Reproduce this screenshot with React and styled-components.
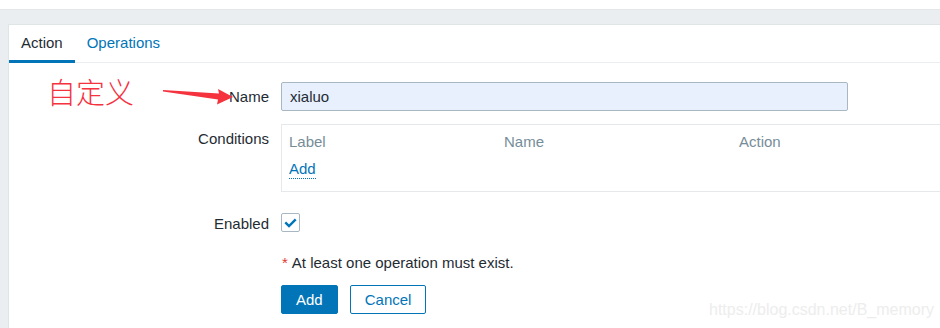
import { createGlobalStyle, styled } from "styled-components";

const GlobalStyle = createGlobalStyle`
  body {
    margin: 0;
    background: #ebeef0;
    font-family: "Liberation Sans", Arial, sans-serif;
    font-size: 15px;
    color: #1f2c33;
    overflow: hidden;
  }
`;

const Page = styled.div`
  position: relative;
  width: 940px;
  height: 328px;
  overflow: hidden;
`;

const TopStrip = styled.div`
  height: 9px;
  background: #fff;
  border-bottom: 1px solid #e3e7ea;
`;

const Main = styled.div`
  padding: 14px 0 0 8px;
`;

const Panel = styled.div`
  background: #fff;
  border: 1px solid #dfe4e7;
  border-right: none;
  height: 320px;
`;

const TabBar = styled.div`
  display: flex;
  height: 37px;
  border-bottom: 1px solid #ebeef0;
`;

const Tab = styled.div`
  height: 38px;
  box-sizing: border-box;
  padding: 8px 12px 0;
  line-height: 20px;
  margin-bottom: -1px;
  color: ${(p) => (p.$active ? "#1f2c33" : "#0275b8")};
  border-bottom: 3px solid ${(p) => (p.$active ? "#0275b8" : "transparent")};
`;

const Form = styled.div`
  padding-top: 19px;
`;

const Row = styled.div`
  display: grid;
  grid-template-columns: 260px 1fr;
  column-gap: 12px;
  align-items: start;
  margin-top: ${(p) => p.$mt || 0}px;
`;

const Label = styled.div`
  text-align: right;
  line-height: ${(p) => p.$lh || 29}px;
`;

const Input = styled.div`
  width: 567px;
  height: 29px;
  box-sizing: border-box;
  background: #e8f0fe;
  border: 1px solid #a9b7c2;
  border-radius: 2px;
  padding: 0 8px;
  line-height: 27px;
  color: #1f2c33;
`;

const CondBox = styled.div`
  height: 68px;
  box-sizing: border-box;
  border: 1px solid #e6e9eb;
  border-right: none;
  padding: 6px 0 0 7px;
`;

const CondHead = styled.div`
  display: grid;
  grid-template-columns: 215px 235px 1fr;
  line-height: 21px;
  color: #768d99;
`;

const LinkText = styled.span`
  display: inline-block;
  margin-top: 8px;
  line-height: 18px;
  color: #0275b8;
  border-bottom: 1px dotted #0275b8;
`;

const CheckBox = styled.div`
  width: 19px;
  height: 19px;
  box-sizing: border-box;
  border: 1px solid #a9b7c2;
  border-radius: 2px;
  display: flex;
  align-items: center;
  justify-content: center;
  svg {
    display: block;
  }
`;

const Message = styled.div`
  line-height: 18px;
  padding-left: 1px;
`;

const Asterisk = styled.span`
  color: #e33734;
  margin-right: 4px;
`;

const Buttons = styled.div`
  display: flex;
  gap: 12px;
`;

const Button = styled.div`
  height: 29px;
  box-sizing: border-box;
  padding: 0 14px;
  line-height: 27px;
  border-radius: 2px;
  border: 1px solid #0275b8;
  background: ${(p) => (p.$primary ? "#0275b8" : "#fff")};
  color: ${(p) => (p.$primary ? "#fff" : "#0275b8")};
`;

const Note = styled.div`
  position: absolute;
  left: 47px;
  top: 74px;
  font-family: "Noto Sans CJK SC", sans-serif;
  font-size: 29px;
  font-weight: 300;
  line-height: 34px;
  color: #f5333f;
`;

const Arrow = styled.svg`
  position: absolute;
  left: 0;
  top: 0;
  pointer-events: none;
`;

const Watermark = styled.div`
  position: absolute;
  left: 709px;
  top: 301px;
  font-size: 16px;
  line-height: 18px;
  color: #ededed;
`;

export default function App() {
  return (
    <Page>
      <GlobalStyle />
      <TopStrip />
      <Main>
        <Panel>
          <TabBar>
            <Tab $active>Action</Tab>
            <Tab>Operations</Tab>
          </TabBar>
          <Form>
            <Row>
              <Label>Name</Label>
              <Input>xialuo</Input>
            </Row>
            <Row $mt={13}>
              <Label>Conditions</Label>
              <CondBox>
                <CondHead>
                  <span>Label</span>
                  <span>Name</span>
                  <span>Action</span>
                </CondHead>
                <LinkText>Add</LinkText>
              </CondBox>
            </Row>
            <Row $mt={21}>
              <Label $lh={22}>Enabled</Label>
              <CheckBox>
                <svg width="13" height="10" viewBox="0 0 13 10">
                  <path d="M1.3 4.3 L5 8 L11.7 1.3" fill="none" stroke="#0275b8" strokeWidth="2.4" />
                </svg>
              </CheckBox>
            </Row>
            <Row $mt={19}>
              <span />
              <Message>
                <Asterisk>*</Asterisk>At least one operation must exist.
              </Message>
            </Row>
            <Row $mt={13}>
              <span />
              <Buttons>
                <Button $primary>Add</Button>
                <Button>Cancel</Button>
              </Buttons>
            </Row>
          </Form>
        </Panel>
      </Main>
      <Note>自定义</Note>
      <Arrow width="940" height="328">
        <polygon points="163,90 219,93.5 218,89 233,97 217,104.5 218,99.5 163,91.5" fill="#f5333f" />
      </Arrow>
      <Watermark>https://blog.csdn.net/B_memory</Watermark>
    </Page>
  );
}
